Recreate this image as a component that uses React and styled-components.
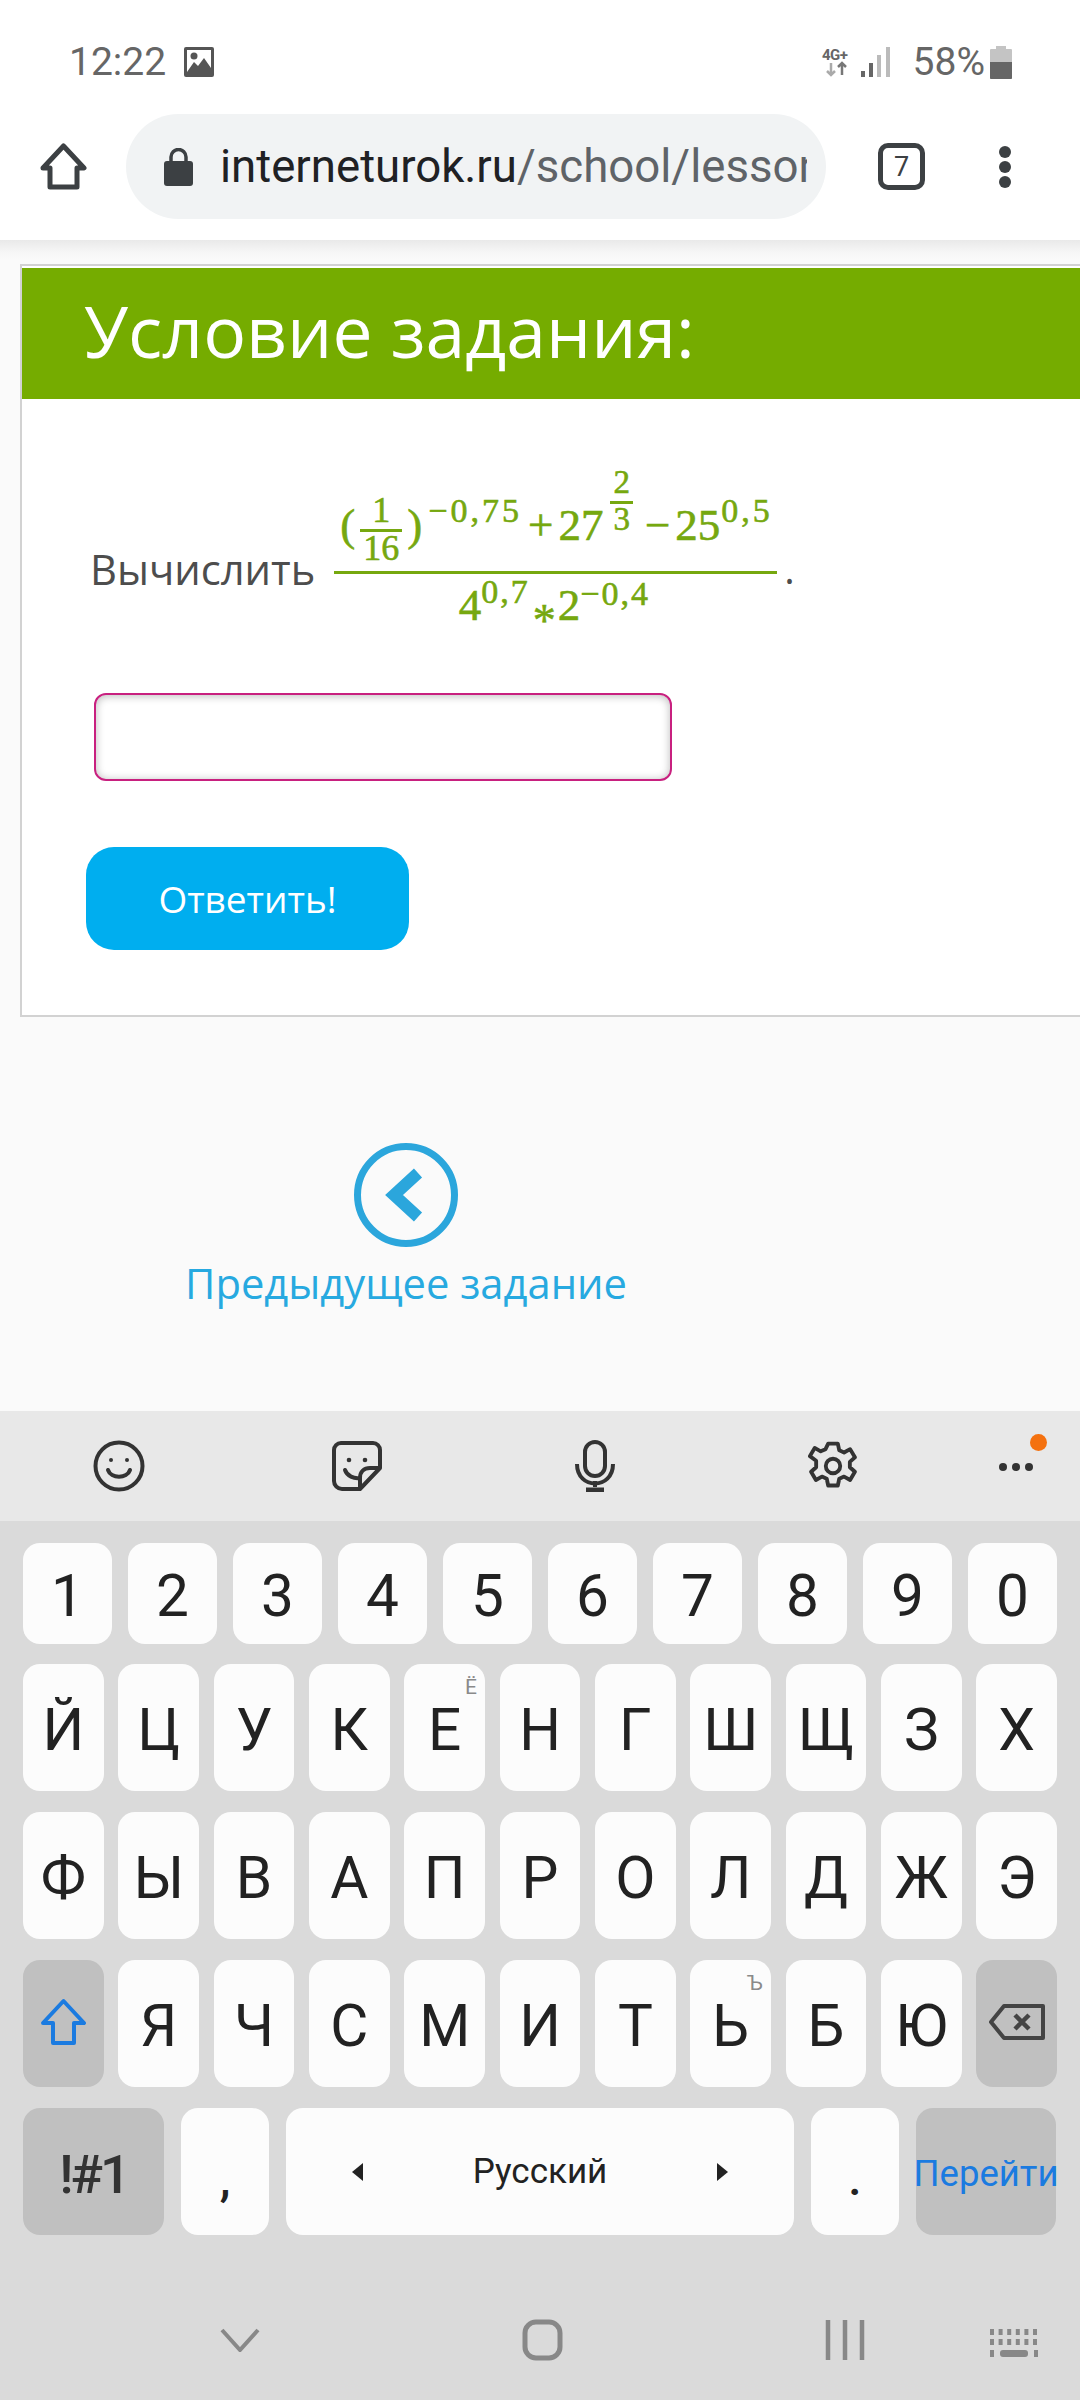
import React from 'react';
import styled, { createGlobalStyle } from 'styled-components';

const Global = createGlobalStyle`
  html, body { margin: 0; padding: 0; background: #fafafa; }
  * { box-sizing: border-box; }
`;

const Screen = styled.div`
  width: 1080px; height: 2400px; display: flex; flex-direction: column; overflow: hidden;
  font-family: Roboto, "Liberation Sans", sans-serif; background: #fafafa;
`;
const StatusBar = styled.div`
  height: 100px; background: #fff; display: flex; align-items: flex-start; padding: 44px 68px 0 69px;
  color: #666; font-size: 39px; line-height: 38px;
`;
const StatusGroup = styled.div`display: flex; align-items: center; height: 36px; gap: ${p => p.$gap}px;`;
const Spacer = styled.div`flex: 1;`;
const Toolbar = styled.div`
  height: 140px; background: #fff; display: flex; align-items: flex-start; padding: 14px 0 0 40px;
`;
const ToolIcon = styled.svg`display: block; flex: none; margin-top: ${p => p.$top || 0}px;`;
const AddressBar = styled.div`
  width: 700px; height: 105px; margin-left: 39px; margin-right: 52px; border-radius: 53px; background: #f1f3f4;
  display: flex; align-items: center; padding: 0 19px 0 38px; overflow: hidden; flex: none;
`;
const Url = styled.div`
  margin-left: 27px; font-size: 45.6px; color: #202124; white-space: nowrap; overflow: hidden; flex: 1;
`;
const UrlPath = styled.span`color: #5f6368;`;
const TabCount = styled.div`
  width: 47px; height: 47px; margin-top: 29px; border: 5px solid #3c4043; border-radius: 10px; flex: none;
  display: flex; align-items: center; justify-content: center; font-size: 27px; color: #3c4043;
`;
const MenuDots = styled.div`
  display: flex; flex-direction: column; gap: 3px; margin: 32px 0 0 74px;
`;
const MenuDot = styled.span`width: 12px; height: 12px; border-radius: 50%; background: #3c4043;`;

const Main = styled.main`
  flex: 1; min-height: 0; padding-top: 24px; overflow: hidden; position: relative;
  background: linear-gradient(#e9e9e9 0, #f6f6f6 12px, #fafafa 20px);
`;
const Card = styled.section`
  margin-left: 20px; background: #fff; border: 2px solid #d2d2d2; border-right: none; padding-top: 2px;
  font-family: "Open Sans", "Noto Sans", sans-serif;
`;
const Banner = styled.h1`
  margin: 0; height: 131px; background: #75ac00; color: #fff; font-weight: 400; font-size: 71.4px; line-height: 126px;
  padding-left: 62px; white-space: nowrap;
`;
const CardBody = styled.div`padding: 66px 0 65px 64px;`;
const Task = styled.div`display: flex; align-items: flex-start; padding-left: 4px;`;
const TaskLabel = styled.span`
  font-size: 41.7px; line-height: 54px; margin-top: 77px; color: #4d4d4d; white-space: nowrap; margin-right: 19px;
`;
const Formula = styled.div`
  width: 443px; height: 160px; color: #76a80f; font-family: "Liberation Serif", serif; font-size: 45px;
  -webkit-text-stroke: 0.6px #76a80f; white-space: nowrap; flex: none;
`;
const Numerator = styled.div`
  height: 106px; display: flex; flex-direction: column; justify-content: flex-end; padding-left: 6px;
`;
const MathLine = styled.div`line-height: 40px; margin-bottom: 8px;`;
const FractionBar = styled.div`height: 3px; background: #76a80f;`;
const Denominator = styled.div`height: 52px; text-align: center; line-height: 62px; padding-right: 3px;`;
const Sup = styled.span`
  font-size: 34px; letter-spacing: ${p => p.$track ?? 3}px; vertical-align: ${p => p.$up}px; margin-left: ${p => p.$ml || 0}px; line-height: ${p => p.$flat ? 0 : 'inherit'};
`;
const Op = styled.span`margin: 0 ${p => p.$r ?? 4}px 0 ${p => p.$l ?? 4}px;`;
const Star = styled.span`font-size: 46px; vertical-align: -16px; margin: 0 2px 0 3px; line-height: 0;`;
const MiniFrac = styled.span`
  display: inline-flex; flex-direction: column; align-items: center; vertical-align: ${p => p.$up}px;
  font-size: ${p => p.$size}px; line-height: 30px; margin: 0 ${p => p.$m}px; padding: 0 ${p => p.$pad || 0}px;
`;
const MiniBar = styled.span`align-self: stretch; height: 3px; background: #76a80f; margin: 4px -${p => p.$pad || 0}px ${p => p.$gap}px;`;
const Dot = styled.span`
  color: #4d4d4d; font-size: 40px; margin: 84px 0 0 7px; font-family: "Open Sans", sans-serif; line-height: 40px;
`;
const AnswerInput = styled.div`
  width: 578px; height: 88px; margin: 68px 0 0 8px; border: 2px solid #c8207f; border-radius: 12px; background: #fff;
  box-shadow: inset 0 1px 8px rgba(0,0,0,.28);
`;
const SubmitButton = styled.div`
  width: 323px; height: 103px; margin-top: 66px; border-radius: 28px; background: #00aeef; color: #fff;
  display: flex; align-items: center; justify-content: center; font-size: 37px;
`;
const PrevLink = styled.div`
  width: 444px; margin: 126px 0 0 184px; display: flex; flex-direction: column; align-items: center;
  color: #27a9e0; font-family: "Open Sans", "Noto Sans", sans-serif; font-size: 41.7px; line-height: 54px; white-space: nowrap;
`;
const PrevLabel = styled.span`margin-top: 9px;`;

const Keyboard = styled.div`height: 989px; background: #dadada; flex: none; display: flex; flex-direction: column;`;
const KeyTools = styled.div`
  height: 110px; background: #e8e8e8; display: grid; grid-template-columns: 238px 238px 238px 237px 129px;
  align-items: center; justify-items: center;
`;
const MoreTool = styled.div`position: relative; width: 46px; height: 50px; display: flex; align-items: center; justify-content: center; gap: 5px; padding-top: 1px;`;
const MoreDot = styled.span`width: 8px; height: 8px; border-radius: 50%; background: #333;`;
const Badge = styled.span`position: absolute; top: -7px; right: -8px; width: 17px; height: 17px; border-radius: 50%; background: #f4710f;`;
const Keys = styled.div`padding: 22px 23px 0 23px; display: flex; flex-direction: column; gap: 21px;`;
const Row = styled.div`display: flex; gap: ${p => p.$gap}px; height: ${p => p.$h}px; margin-bottom: ${p => p.$mb || 0}px;`;
const BottomRow = styled.div`
  display: grid; grid-template-columns: 141px 88px 508px 88px 140px; gap: 17px; height: 127px;
`;
const Key = styled.div`
  flex: 1; min-width: 0; position: relative; border-radius: 17px; background: ${p => p.$fn ? '#c0c0c0' : '#fcfcfc'};
  display: flex; align-items: center; justify-content: center; padding-top: 6px;
  color: #222; font-size: 58.5px; line-height: 1;
`;
const KeyIcon = styled.svg`display: block; margin-top: -9px;`;
const Sub = styled.span`position: absolute; top: 13px; right: 8px; font-size: 21px; color: #8a8a8a;`;
const PunctKey = styled(Key)`align-items: flex-end; padding: 0 0 32px; font-size: 48px; font-weight: 500;`;
const SymKey = styled(Key)`font-size: 54px; letter-spacing: -3px; color: #333; font-weight: 500;`;
const GoKey = styled(Key)`font-size: 36.5px; color: #1b7be0; white-space: nowrap;`;
const SpaceKey = styled(Key)`font-size: 35px; justify-content: space-between; padding: 0 66px;`;
const NavBar = styled.div`flex: 1; display: flex; align-items: center; padding: 44px 0 0 220px;`;
const NavIcon = styled.svg`display: block; flex: none; margin-left: ${p => p.$ml || 0}px; margin-top: ${p => p.$top || 0}px;`;
const SignalMark = styled.svg`display: block; overflow: visible; margin-right: ${p => p.$mr}px;`;

const Row1 = '1234567890'.split('');
const Row2 = [['Й'],['Ц'],['У'],['К'],['Е','Ё'],['Н'],['Г'],['Ш'],['Щ'],['З'],['Х']];
const Row3 = 'ФЫВАПРОЛДЖЭ'.split('');
const Row4 = [['Я'],['Ч'],['С'],['М'],['И'],['Т'],['Ь','Ъ'],['Б'],['Ю']];

export default function App() {
  return (
    <Screen>
      <Global />
      <StatusBar>
        <StatusGroup $gap={18}>
          <span>12:22</span>
          <svg width="30" height="30" viewBox="0 0 30 30">
            <rect width="30" height="30" rx="2" fill="#555" />
            <rect x="3" y="3" width="24" height="24" fill="#fff" />
            <circle cx="10" cy="9" r="3.5" fill="#555" />
            <path d="M3 25 L10 15 L14 19 L20 11 L27 21 V27 H3Z" fill="#555" />
          </svg>
        </StatusGroup>
        <Spacer />
        <StatusGroup $gap={5}>
          <SignalMark $mr={4} width="30" height="30" viewBox="0 0 30 30">
            <text x="0" y="13" fontSize="15" fontWeight="700" fontFamily="Roboto" fill="#666" letterSpacing="-0.5">4G+</text>
            <path d="M9 16v12M5 24l4 4 4-4" stroke="#aaa" strokeWidth="2.5" fill="none" />
            <path d="M20 28V16M16 20l4-4 4 4" stroke="#777" strokeWidth="2.5" fill="none" />
          </SignalMark>
          <SignalMark $mr={18} width="29" height="30" viewBox="0 0 29 30">
            <rect x="0" y="24" width="4" height="6" fill="#666" />
            <rect x="8" y="16" width="4" height="14" fill="#666" />
            <rect x="16" y="8" width="4" height="22" fill="#bbb" />
            <rect x="25" y="0" width="4" height="30" fill="#bbb" />
          </SignalMark>
          <span>58%</span>
          <svg width="22" height="33" viewBox="0 0 22 33">
            <path d="M6 0h10v3h5a1 1 0 0 1 1 1v28a1 1 0 0 1-1 1H1a1 1 0 0 1-1-1V4a1 1 0 0 1 1-1h5z" fill="#c4c4c4" />
            <path d="M0 16h22v16a1 1 0 0 1-1 1H1a1 1 0 0 1-1-1z" fill="#666" />
          </svg>
        </StatusGroup>
      </StatusBar>
      <Toolbar>
        <ToolIcon $top={29} width="47" height="47" viewBox="0 0 47 47">
          <path d="M23.5 3 L44 25 H37 V44 H10 V25 H3Z" fill="none" stroke="#3c4043" strokeWidth="5" strokeLinejoin="round" />
        </ToolIcon>
        <AddressBar>
          <svg width="29" height="38" viewBox="0 0 29 38" style={{ flex: 'none' }}>
            <path d="M7 15V9a7.5 7.5 0 0 1 15 0v6" fill="none" stroke="#3c4043" strokeWidth="3.5" />
            <rect y="13" width="29" height="25" rx="3" fill="#3c4043" />
          </svg>
          <Url>interneturok.ru<UrlPath>/school/lesson/</UrlPath></Url>
        </AddressBar>
        <TabCount>7</TabCount>
        <MenuDots><MenuDot /><MenuDot /><MenuDot /></MenuDots>
      </Toolbar>
      <Main>
        <Card>
          <Banner>Условие задания:</Banner>
          <CardBody>
            <Task>
              <TaskLabel>Вычислить</TaskLabel>
              <Formula>
                <Numerator>
                  <MathLine>
                    (<MiniFrac $up={18} $m={5} $size={36} $pad={3}>1<MiniBar $gap={1} $pad={3} />16</MiniFrac>)
                    <Sup $up={18} $ml={6}>−0,75</Sup>
                    <Op $l={6} $r={5}>+</Op>27
                    <MiniFrac $up={47} $m={7} $size={33} $pad={3}>2<MiniBar $gap={0} $pad={3} />3</MiniFrac>
                    <Op $l={5} $r={5}>−</Op>25
                    <Sup $up={18} $ml={1}>0,5</Sup>
                  </MathLine>
                </Numerator>
                <FractionBar />
                <Denominator>
                  4<Sup $up={17} $flat $track={2}>0,7</Sup><Star>*</Star>2<Sup $up={15} $flat $track={2}>−0,4</Sup>
                </Denominator>
              </Formula>
              <Dot>.</Dot>
            </Task>
            <AnswerInput />
            <SubmitButton>Ответить!</SubmitButton>
          </CardBody>
        </Card>
        <PrevLink>
          <svg width="104" height="104" viewBox="0 0 104 104">
            <circle cx="52" cy="52" r="48.5" fill="none" stroke="#2ba6dc" strokeWidth="7" />
            <path d="M64 30 L40 52 L64 74" fill="none" stroke="#2ba6dc" strokeWidth="12" />
          </svg>
          <PrevLabel>Предыдущее задание</PrevLabel>
        </PrevLink>
      </Main>
      <Keyboard>
        <KeyTools>
          <svg width="52" height="52" viewBox="0 0 52 52" fill="none" stroke="#333" strokeWidth="4">
            <circle cx="26" cy="26" r="23.5" />
            <circle cx="18" cy="20" r="2" fill="#333" stroke="none" />
            <circle cx="34" cy="20" r="2" fill="#333" stroke="none" />
            <path d="M15 30c3 9 19 9 22 0" strokeLinecap="round" />
          </svg>
          <svg width="50" height="50" viewBox="0 0 50 50" fill="none" stroke="#333" strokeWidth="4" strokeLinejoin="round">
            <path d="M28 48H10a8 8 0 0 1-8-8V9a7 7 0 0 1 7-7h32a7 7 0 0 1 7 7v18Z" />
            <path d="M48 27 H38c-6 0-10 4-10 10v11" />
            <circle cx="17" cy="19" r="2.3" fill="#333" stroke="none" />
            <circle cx="33" cy="19" r="2.3" fill="#333" stroke="none" />
            <path d="M13 29c2 6 9 9 15 8" strokeLinecap="round" />
          </svg>
          <svg width="40" height="52" viewBox="0 0 40 52" fill="none" stroke="#333" strokeWidth="4">
            <rect x="10" y="2" width="20" height="34" rx="10" />
            <path d="M2 24c0 26 36 26 36 0" />
            <path d="M11 50h18" strokeWidth="5" />
            <path d="M20 41v6" />
          </svg>
          <svg width="50" height="52" viewBox="2.4 1.2 19.2 21.6" fill="none" stroke="#333" strokeWidth="1.6" strokeLinejoin="round">
            <path d="M10 2.5h4l.6 2.8 2 .9 2.5-1.4 2 3.4-2.1 1.9v2.2l2.1 1.9-2 3.4-2.5-1.4-2 .9-.6 2.8h-4l-.6-2.8-2-.9-2.5 1.4-2-3.4 2.1-1.9V9.6L2.4 7.7l2-3.4 2.5 1.4 2-.9z" transform="translate(0 .2)" />
            <circle cx="12" cy="12" r="3" />
          </svg>
          <MoreTool>
            <MoreDot /><MoreDot /><MoreDot />
            <Badge />
          </MoreTool>
        </KeyTools>
        <Keys>
          <Row $gap={16} $h={101} $mb={-1}>
            {Row1.map(k => <Key key={k}>{k}</Key>)}
          </Row>
          <Row $gap={14.6} $h={127}>
            {Row2.map(([k, s]) => <Key key={k}>{k}{s && <Sub>{s}</Sub>}</Key>)}
          </Row>
          <Row $gap={14.6} $h={127}>
            {Row3.map(k => <Key key={k}>{k}</Key>)}
          </Row>
          <Row $gap={14.6} $h={127}>
            <Key $fn>
              <KeyIcon width="47" height="48" viewBox="0 0 47 48">
                <path d="M23.5 3 L44 25 H34 V45 H13 V25 H3Z" fill="none" stroke="#1b7be0" strokeWidth="4" strokeLinejoin="round" />
              </KeyIcon>
            </Key>
            {Row4.map(([k, s]) => <Key key={k}>{k}{s && <Sub>{s}</Sub>}</Key>)}
            <Key $fn>
              <KeyIcon width="56" height="36" viewBox="0 0 56 36" fill="none" stroke="#444" strokeWidth="4" strokeLinejoin="round">
                <path d="M15 2H54V34H15L2 18Z" />
                <path d="M26 11l14 14M40 11L26 25" strokeWidth="4.5" />
              </KeyIcon>
            </Key>
          </Row>
          <BottomRow>
            <SymKey $fn>!#1</SymKey>
            <PunctKey>,</PunctKey>
            <SpaceKey>
              <svg width="11" height="18" viewBox="0 0 11 18"><path d="M11 0V18L0 9Z" fill="#222" /></svg>
              <span>Русский</span>
              <svg width="11" height="18" viewBox="0 0 11 18"><path d="M0 0V18L11 9Z" fill="#222" /></svg>
            </SpaceKey>
            <PunctKey>.</PunctKey>
            <GoKey $fn>Перейти</GoKey>
          </BottomRow>
        </Keys>
        <NavBar>
          <NavIcon width="40" height="24" viewBox="0 0 40 24"><path d="M2 2 L20 22 L38 2" fill="none" stroke="#888" strokeWidth="4" /></NavIcon>
          <NavIcon $ml={262} width="41" height="42" viewBox="0 0 41 42"><rect x="3" y="3" width="35" height="36" rx="11" fill="none" stroke="#888" strokeWidth="5" /></NavIcon>
          <NavIcon $ml={262} width="40" height="40" viewBox="0 0 40 40"><path d="M3 0V40M20 0V40M37 0V40" stroke="#888" strokeWidth="4.5" /></NavIcon>
          <NavIcon $ml={125} $top={6} width="48" height="28" viewBox="0 0 48 28" fill="#888">
            {[0,1].map(r => [0,1,2,3,4,5].map(c => <rect key={r+'-'+c} x={c * 8.6} y={r * 10} width="4" height="6" />))}
            <rect x="0" y="21" width="4" height="7" /><rect x="44" y="21" width="4" height="7" /><rect x="10" y="21" width="28" height="7" rx="3" />
          </NavIcon>
        </NavBar>
      </Keyboard>
    </Screen>
  );
}
